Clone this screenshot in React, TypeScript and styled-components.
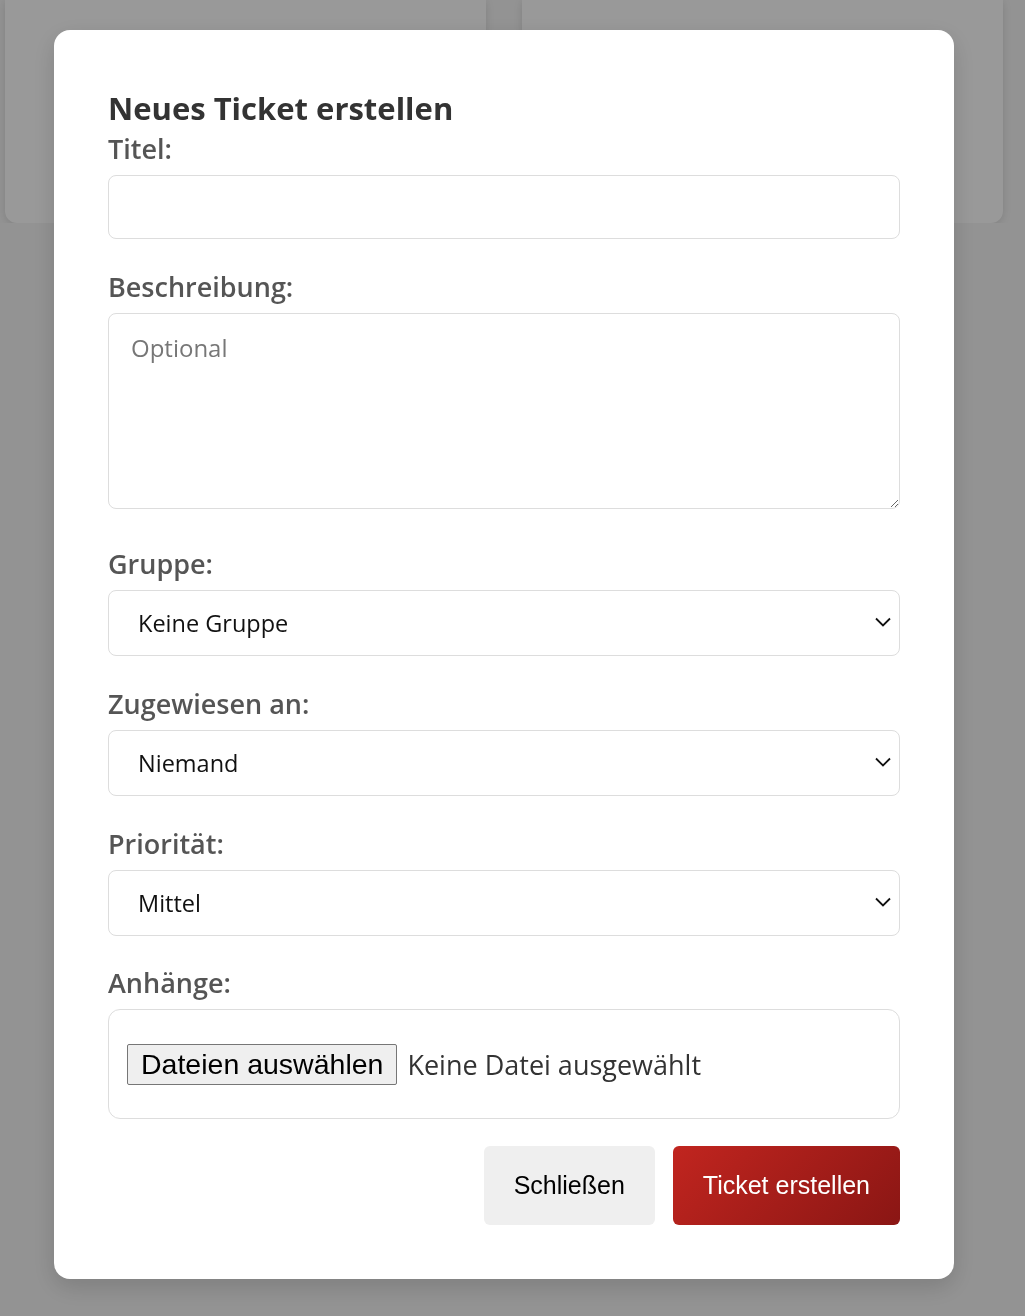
import React from "react";
import styled, { createGlobalStyle } from "styled-components";

const GlobalStyle = createGlobalStyle`
  html, body {
    margin: 0;
    padding: 0;
    background: #f5f5f5;
    font-family: "Open Sans", "Noto Sans", sans-serif;
  }
  * { box-sizing: border-box; }
`;

const Board = styled.div`
  display: grid;
  grid-template-columns: 481px 481px;
  gap: 36px;
  padding: 0 0 0 5px;
`;

const Card = styled.div`
  height: 223px;
  background: #fff;
  border-radius: 0 0 12px 12px;
  box-shadow: 0 2px 8px rgba(0, 0, 0, 0.12);
`;

const Overlay = styled.div`
  position: fixed;
  inset: 0;
  background: rgba(0, 0, 0, 0.4);
  display: flex;
  justify-content: center;
  align-items: flex-start;
  padding: 30px 17px 0 0;
`;

const Modal = styled.div`
  width: 900px;
  background: #fff;
  border-radius: 16px;
  padding: 58px 54px 54px;
  box-shadow: 0 8px 24px rgba(0, 0, 0, 0.15);
`;

const Title = styled.h2`
  margin: 0 0 5px;
  font-size: 31px;
  line-height: 40px;
  font-weight: 700;
  color: #333;
`;

const Group = styled.div<{ $gap?: number }>`
  display: flex;
  flex-direction: column;
  margin-bottom: ${(p) => p.$gap ?? 32}px;
`;

const Label = styled.label`
  font-size: 27px;
  line-height: 32px;
  font-weight: 600;
  color: #555;
  margin-bottom: 10px;
`;

const Field = styled.input`
  height: 64px;
  border: 1px solid #ddd;
  border-radius: 8px;
  padding: 0 22px;
  font: inherit;
  font-size: 24px;
  color: #222;
  outline: none;
`;

const TextArea = styled.textarea`
  height: 196px;
  border: 1px solid #ddd;
  border-radius: 8px;
  padding: 17px 22px;
  font: inherit;
  font-size: 24px;
  color: #222;
  outline: none;
  resize: vertical;
  &::placeholder { color: #777; }
`;

const SelectWrap = styled.div`
  position: relative;
`;

const Select = styled.select`
  width: 100%;
  height: 66px;
  appearance: none;
  border: 1px solid #ddd;
  border-radius: 8px;
  padding: 0 50px 0 29px;
  background: #fff;
  font: inherit;
  font-size: 23.5px;
  color: #111;
  outline: none;
`;

const Chevron = styled.svg`
  position: absolute;
  right: 8px;
  top: 50%;
  width: 18px;
  height: 10px;
  margin-top: -6px;
  pointer-events: none;
`;

const FileBox = styled.div`
  display: flex;
  align-items: center;
  gap: 10px;
  height: 110px;
  border: 1px solid #ddd;
  border-radius: 12px;
  padding: 0 18px;
`;

const FileButton = styled.label`
  display: flex;
  align-items: center;
  height: 41px;
  padding: 0 13px;
  background: #efefef;
  border: 1px solid #767676;
  border-radius: 2px;
  font-family: "Liberation Sans", Arial, sans-serif;
  font-size: 28.5px;
  color: #000;
  input { display: none; }
`;

const FileInfo = styled.span`
  font-size: 27px;
  color: #333;
`;

const Actions = styled.div`
  display: flex;
  justify-content: flex-end;
  gap: 18px;
`;

const Button = styled.button<{ $primary?: boolean }>`
  height: 79px;
  padding: 0 30px;
  border: none;
  border-radius: 6px;
  font-family: "Liberation Sans", Arial, sans-serif;
  font-size: 25px;
  color: ${(p) => (p.$primary ? "#fff" : "#000")};
  background: ${(p) =>
    p.$primary ? "linear-gradient(135deg, #c1251f 0%, #8a1614 100%)" : "#efefef"};
`;

function ArrowDown() {
  return (
    <Chevron viewBox="0 0 18 10" fill="none">
      <path d="M2 1.5l7 7 7-7" stroke="#111" strokeWidth="1.8" />
    </Chevron>
  );
}

function Dropdown({ value }: { value: string }) {
  return (
    <SelectWrap>
      <Select defaultValue={value}>
        <option>{value}</option>
      </Select>
      <ArrowDown />
    </SelectWrap>
  );
}

export default function App() {
  return (
    <>
      <GlobalStyle />
      <Board>
        <Card />
        <Card />
      </Board>
      <Overlay>
        <Modal>
          <Title>Neues Ticket erstellen</Title>
          <Group $gap={32}>
            <Label>Titel:</Label>
            <Field type="text" />
          </Group>
          <Group $gap={39}>
            <Label>Beschreibung:</Label>
            <TextArea placeholder="Optional" />
          </Group>
          <Group>
            <Label>Gruppe:</Label>
            <Dropdown value="Keine Gruppe" />
          </Group>
          <Group>
            <Label>Zugewiesen an:</Label>
            <Dropdown value="Niemand" />
          </Group>
          <Group $gap={31}>
            <Label>Priorität:</Label>
            <Dropdown value="Mittel" />
          </Group>
          <Group $gap={27}>
            <Label>Anhänge:</Label>
            <FileBox>
              <FileButton>
                Dateien auswählen
                <input type="file" multiple />
              </FileButton>
              <FileInfo>Keine Datei ausgewählt</FileInfo>
            </FileBox>
          </Group>
          <Actions>
            <Button type="button">Schließen</Button>
            <Button type="button" $primary>
              Ticket erstellen
            </Button>
          </Actions>
        </Modal>
      </Overlay>
    </>
  );
}
